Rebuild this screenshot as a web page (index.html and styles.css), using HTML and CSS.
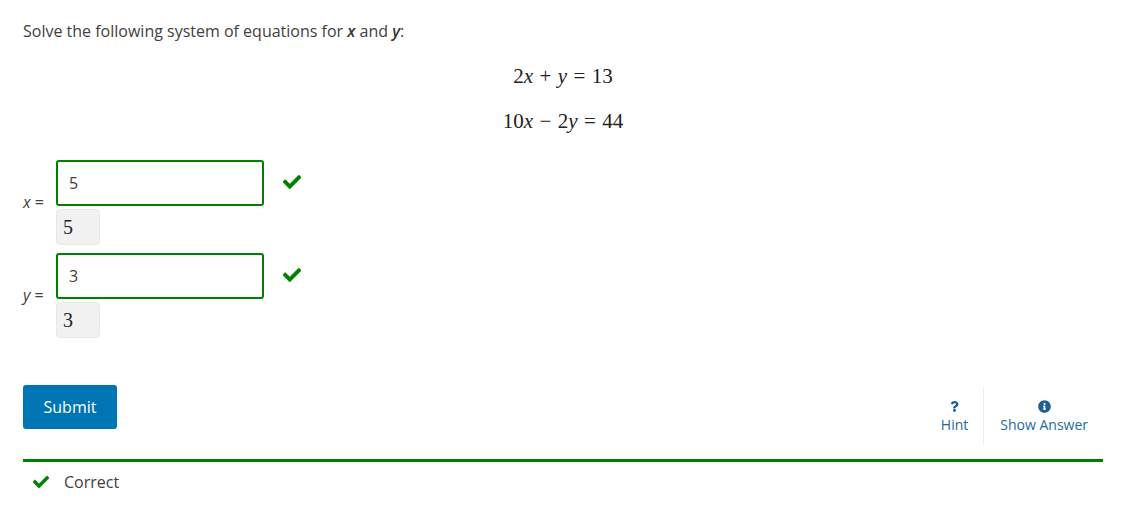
FILE: index.html
```html
<!DOCTYPE html>
<html lang="en">
<head>
<meta charset="utf-8">
<title>System of equations</title>
<link rel="stylesheet" href="styles.css">
</head>
<body>
<main class="problem">
  <p class="prompt">Solve the following system of equations for <b><i>x</i></b> and <b><i>y</i></b>:</p>
  <div class="equations">
    <div class="eq"><span>2</span><i>x</i><span class="op">+</span><i>y</i><span class="op">=</span><span>13</span></div>
    <div class="eq"><span>10</span><i>x</i><span class="op">−</span><span>2</span><i>y</i><span class="op">=</span><span>44</span></div>
  </div>
  <div class="answers">
    <div class="answer">
      <label class="var"><i>x</i> =</label>
      <div class="fields">
        <div class="entry">
          <input class="box" type="text" value="5">
          <svg class="tick" viewBox="0 0 512 512" width="18" height="18"><path d="M173.898 439.404l-166.4-166.4c-9.997-9.997-9.997-26.206 0-36.204l36.203-36.204c9.997-9.998 26.207-9.998 36.204 0L192 312.69 432.095 72.596c9.997-9.997 26.207-9.997 36.204 0l36.203 36.204c9.997 9.997 9.997 26.206 0 36.204l-294.4 294.401c-9.998 9.997-26.207 9.997-36.204-.001z"/></svg>
        </div>
        <div class="preview">5</div>
      </div>
    </div>
    <div class="answer">
      <label class="var"><i>y</i> =</label>
      <div class="fields">
        <div class="entry">
          <input class="box" type="text" value="3">
          <svg class="tick" viewBox="0 0 512 512" width="18" height="18"><path d="M173.898 439.404l-166.4-166.4c-9.997-9.997-9.997-26.206 0-36.204l36.203-36.204c9.997-9.998 26.207-9.998 36.204 0L192 312.69 432.095 72.596c9.997-9.997 26.207-9.997 36.204 0l36.203 36.204c9.997 9.997 9.997 26.206 0 36.204l-294.4 294.401c-9.998 9.997-26.207 9.997-36.204-.001z"/></svg>
        </div>
        <div class="preview">3</div>
      </div>
    </div>
  </div>
  <div class="actions">
    <button class="submit" type="button">Submit</button>
    <div class="tools">
      <a class="tool tool-hint">
        <svg class="icon-hint" viewBox="0 0 384 512" width="9" height="11"><path d="M202.021 0C122.202 0 70.503 32.703 29.914 91.026c-7.363 10.58-5.093 25.086 5.178 32.874l43.138 32.709c10.373 7.865 25.132 6.026 33.253-4.148 25.049-31.381 43.63-49.449 82.757-49.449 30.764 0 68.816 19.799 68.816 49.631 0 22.552-18.617 34.134-48.993 51.164-35.423 19.86-82.299 44.576-82.299 106.405V320c0 13.255 10.745 24 24 24h72.471c13.255 0 24-10.745 24-24v-5.773c0-42.86 125.268-44.645 125.268-160.627C377.504 66.256 286.902 0 202.021 0zM192 373.459c-38.196 0-69.271 31.075-69.271 69.271 0 38.195 31.075 69.27 69.271 69.27s69.271-31.075 69.271-69.271-31.075-69.27-69.271-69.27z"/></svg>
        <span>Hint</span>
      </a>
      <a class="tool tool-answer">
        <svg viewBox="0 0 512 512" width="13" height="13"><path d="M256 8C119.043 8 8 119.083 8 256c0 136.997 111.043 248 248 248s248-111.003 248-248C504 119.083 392.957 8 256 8zm0 110c23.196 0 42 18.804 42 42s-18.804 42-42 42-42-18.804-42-42 18.804-42 42-42zm56 254c0 6.627-5.373 12-12 12h-88c-6.627 0-12-5.373-12-12v-24c0-6.627 5.373-12 12-12h12v-64h-12c-6.627 0-12-5.373-12-12v-24c0-6.627 5.373-12 12-12h64c6.627 0 12 5.373 12 12v100h12c6.627 0 12 5.373 12 12v24z"/></svg>
        <span>Show Answer</span>
      </a>
    </div>
  </div>
  <div class="status">
    <svg class="tick-small" viewBox="0 0 512 512" width="16" height="16"><path d="M173.898 439.404l-166.4-166.4c-9.997-9.997-9.997-26.206 0-36.204l36.203-36.204c9.997-9.998 26.207-9.998 36.204 0L192 312.69 432.095 72.596c9.997-9.997 26.207-9.997 36.204 0l36.203 36.204c9.997 9.997 9.997 26.206 0 36.204l-294.4 294.401c-9.998 9.997-26.207 9.997-36.204-.001z"/></svg>
    <span>Correct</span>
  </div>
</main>
</body>
</html>
```
FILE: styles.css
```css
* { box-sizing: border-box; }
html, body { margin: 0; padding: 0; background: #fff; }
body {
  font-family: "Open Sans", sans-serif;
  font-size: 16px;
  color: #414141;
  overflow: hidden;
}
.problem { width: 1103px; padding: 19px 0 0 23px; }
.prompt { margin: 0; line-height: 24px; }
.prompt b { color: #333; font-weight: 600; }
.equations {
  margin-top: 22px;
  display: flex;
  flex-direction: column;
  align-items: center;
  gap: 22px;
  font-family: "Liberation Serif", serif;
  font-size: 21px;
  line-height: 23px;
  color: #222;
  width: 1080px;
}
.eq { display: flex; align-items: baseline; }
.eq .op { margin: 0 6.4px; }
.answers {
  margin-top: 27px;
  display: flex;
  flex-direction: column;
  gap: 8px;
}
.answer { display: flex; align-items: center; }
.var { width: 33px; font-size: 16px; color: #414141; padding-bottom: 2px; }
.fields { display: flex; flex-direction: column; gap: 3px; }
.entry { display: flex; align-items: center; }
.box {
  width: 208px;
  height: 46px;
  border: 2px solid #008000;
  border-radius: 3px;
  padding: 0 11px;
  font: 16px "Open Sans", sans-serif;
  color: #414141;
  background: #fff;
  outline: none;
}
.tick { margin: 0 0 2px 19px; fill: #008000; stroke: #008000; stroke-width: 14; }
.preview {
  width: 44px;
  height: 36px;
  background: #f1f1f1;
  border: 1px solid #e8e8e8;
  border-radius: 4px;
  padding-left: 6px;
  font-family: "Liberation Serif", serif;
  font-size: 20px;
  line-height: 34px;
  color: #222;
}
.actions {
  margin-top: 47px;
  display: flex;
  justify-content: space-between;
  align-items: flex-start;
  box-sizing: content-box;
  height: 74px;
  border-bottom: 3px solid #008000;
}
.submit {
  width: 94px;
  height: 44px;
  background: #0075b4;
  border: 0;
  border-radius: 3px;
  color: #fff;
  font: 500 16px "Open Sans", sans-serif;
  padding: 0;
}
.tools { display: flex; margin-top: 2px; height: 58px; }
.tool {
  display: flex;
  flex-direction: column;
  align-items: center;
  font-size: 14px;
  color: #1e6b9f;
  padding: 13px 15px 0;
  line-height: 19px;
}
.tool svg { display: block; margin-bottom: 2px; fill: #1e5f96; }
.tool .icon-hint { margin-top: 1px; margin-bottom: 3px; }
.tool-hint { border-right: 1px solid #ececec; }
.tool-answer { padding-left: 16px; }
.status {
  display: flex;
  align-items: center;
  height: 40px;
  padding-left: 10px;
}
.tick-small { margin-right: 15px; fill: #008000; stroke: #008000; stroke-width: 14; }
```
